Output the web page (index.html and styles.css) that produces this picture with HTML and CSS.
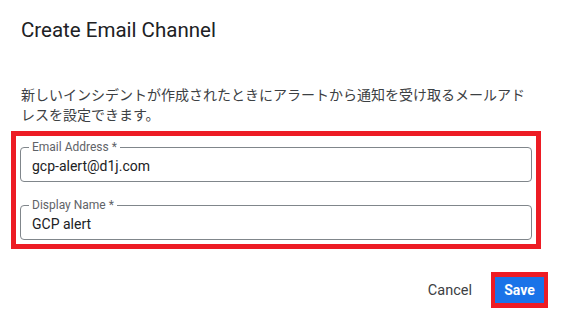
FILE: index.html
```html
<!DOCTYPE html>
<html lang="en">
<head>
    <meta charset="UTF-8">
    <meta name="viewport" content="width=device-width, initial-scale=1.0">
    <title>Create Email Channel</title>
    <link rel="stylesheet" href="styles.css">
</head>
<body>
    <div class="dialog">
        <h1 class="dialog-title">Create Email Channel</h1>
        <p class="dialog-text">新しいインシデントが作成されたときにアラートから通知を受け取るメールアドレスを設定できます。</p>

        <div class="highlight fields">
            <fieldset class="field">
                <legend class="field-label">Email Address *</legend>
                <div class="field-value">gcp-alert@d1j.com</div>
            </fieldset>
            <fieldset class="field">
                <legend class="field-label">Display Name *</legend>
                <div class="field-value">GCP alert</div>
            </fieldset>
        </div>

        <div class="actions">
            <button class="btn btn-text">Cancel</button>
            <div class="highlight save-wrap">
                <button class="btn btn-primary">Save</button>
            </div>
        </div>
    </div>
</body>
</html>
```

FILE: styles.css
```css
body {
    margin: 0;
    background: #fff;
    color: #202124;
    font-family: Roboto, "Noto Sans CJK JP", sans-serif;
}
.dialog {
    width: 562px;
    height: 324px;
    box-sizing: border-box;
    padding-top: 18px;
}
.dialog-title {
    margin: 0 0 0 21px;
    font-size: 20.5px;
    font-weight: 400;
    line-height: 24px;
    color: #202124;
}
.dialog-text {
    margin: 43px 0 0 21px;
    width: 512px;
    font-size: 14px;
    line-height: 20px;
    color: #3c4043;
}
.highlight {
    border: 5px solid #ed1c24;
}
.fields {
    margin: 6px 0 0 11px;
    width: 512px;
    padding: 5px 4px 4px 4px;
    display: flex;
    flex-direction: column;
    gap: 17px;
}
.field {
    margin: 0;
    padding: 0 11px;
    height: 41px;
    box-sizing: border-box;
    border: 1px solid #80868b;
    border-radius: 4px;
}
.field-label {
    padding: 0 3px;
    margin-left: -3px;
    font-size: 12px;
    line-height: 12px;
    color: #5f6368;
}
.field-value {
    font-size: 14px;
    line-height: 27px;
    color: #202124;
}
.actions {
    margin-top: 23px;
    padding-right: 14px;
    display: flex;
    justify-content: flex-end;
    align-items: center;
    gap: 11px;
}
.save-wrap {
    border-width: 5px 4px;
    display: flex;
}
.btn {
    font-family: Roboto, sans-serif;
    font-size: 14px;
    border: none;
    cursor: pointer;
}
.btn-text {
    background: none;
    color: #3c4043;
    font-weight: 400;
    font-size: 14.5px;
    padding: 0 8px;
    height: 26px;
}
.btn-primary {
    background: #1a73e8;
    color: #fff;
    font-weight: 700;
    width: 49px;
    height: 26px;
    padding: 0;
}
```
